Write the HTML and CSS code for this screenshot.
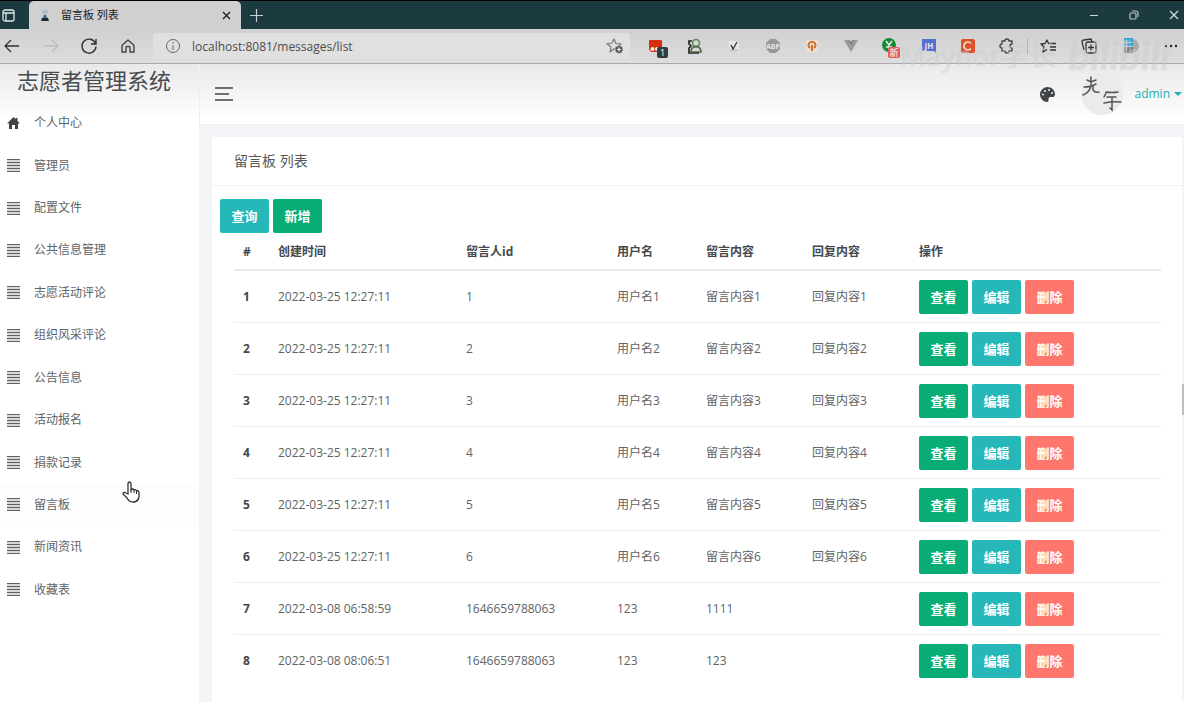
FILE: index.html
```html
<!DOCTYPE html>
<html lang="zh-CN">
<head>
<meta charset="utf-8">
<meta name="viewport" content="width=device-width, initial-scale=1">
<title>留言板 列表</title>
<link rel="stylesheet" href="styles.css">
</head>
<body>
<svg class="defs" aria-hidden="true">
  <symbol id="lines" viewBox="0 0 13 13"><path d="M0 .5h13M0 3.500h13M0 6.500h13M0 9.500h13M0 12.500h13" stroke="#606366" stroke-width="1.400"/></symbol>
</svg>

<header class="browser">
  <div class="titlebar">
    <button class="tab-menu" aria-label="标签页操作"><svg width="13" height="13" viewBox="0 0 13 13" fill="none" stroke="#dfe6e7" stroke-width="1.3"><rect x="1" y="1" width="11" height="11" rx="2"/><path d="M1 4h11M4 4v8"/></svg></button>
    <div class="tab">
      <svg width="10" height="14" viewBox="0 0 10 14"><path d="M2 2h6v2L6 7l3 6H1l3-6-2-3z" fill="#b4bec5"/><path d="M4 7h2l1 3H3z" fill="#45637b"/><path d="M2 10h6l1 3H1z" fill="#152c40"/></svg>
      <span class="tab-title">留言板 列表</span>
      <button aria-label="关闭标签页"><svg width="9" height="9" viewBox="0 0 9 9" stroke="#222" stroke-width="1.4"><path d="M1 1l7 7M8 1L1 8"/></svg></button>
    </div>
    <button class="new-tab" aria-label="新建标签页"><svg width="13" height="13" viewBox="0 0 13 13" stroke="#c5d0d2" stroke-width="1.2"><path d="M6.500 0v13M0 6.500h13"/></svg></button>
    <div class="window-buttons">
      <button aria-label="最小化"><svg width="10" height="10" viewBox="0 0 10 10" stroke="#d5dcdd"><path d="M1 5.500h8"/></svg></button>
      <button aria-label="还原"><svg width="10" height="10" viewBox="0 0 10 10" fill="none" stroke="#b9c4c6" stroke-width="1.2"><rect x="1" y="3" width="6" height="6" rx="1"/><path d="M3 1h4q2 0 2 2v4"/></svg></button>
      <button aria-label="关闭"><svg width="10" height="10" viewBox="0 0 10 10" stroke="#d5dcdd" stroke-width="1.2"><path d="M1 1l8 8M9 1L1 9"/></svg></button>
    </div>
  </div>
  <div class="toolbar">
    <div class="tools">
      <button aria-label="后退"><svg viewBox="0 0 20 20" fill="none" stroke="#333" stroke-width="1.3"><path d="M18 10H4M10 4l-6 6 6 6"/></svg></button>
      <button aria-label="前进"><svg viewBox="0 0 20 20" fill="none" stroke="#bdbdbd" stroke-width="1.3"><path d="M4 10h14M12 4l6 6-6 6"/></svg></button>
      <button aria-label="刷新"><svg viewBox="0 0 20 20" fill="none" stroke="#333" stroke-width="1.4"><path d="M16.500 7.500a7 7 0 1 0 .5 3M17 3v5h-5"/></svg></button>
      <button aria-label="主页"><svg viewBox="0 0 20 20" fill="none" stroke="#444" stroke-width="1.4" stroke-linejoin="round"><path d="M4 9.500L10 4l6 5.500V16h-4v-4.500q0-1-1-1H9q-1 0-1 1V16H4z"/></svg></button>
    </div>
    <div class="address">
      <svg width="16" height="16" viewBox="0 0 16 16" fill="none" stroke="#666"><circle cx="8" cy="8" r="6.500"/><path d="M8 7v5M8 4v1.500"/></svg>
      <input class="url" aria-label="地址" value="localhost:8081/messages/list">
      <button aria-label="收藏此页"><svg width="18" height="18" viewBox="0 0 18 18" fill="none" stroke="#777" stroke-width="1.200"><path d="M8 2l2 4.500 5 .5-3.500 3L8 12l-4 3 1-5-4-3.500 5-.5z" stroke-linejoin="round"/><circle cx="13" cy="12.500" r="4" fill="#555" stroke="#ddd" stroke-width=".6"/><path d="M13 10.500v4M11 12.500h4" stroke="#eee"/></svg></button>
    </div>
    <div class="tools extensions">
      <button aria-label="扩展 1" class="badged"><svg viewBox="0 0 20 20"><path d="M4 4h11q1 0 1 1v11H5l-2-3V5q0-1 1-1z" fill="#d62f0b"/><circle cx="6.500" cy="13" r="2" fill="#eee"/><circle cx="11" cy="13" r="2" fill="#eee"/></svg><span class="badge">1</span></button>
      <button aria-label="扩展 2"><svg viewBox="0 0 20 20" fill="none"><path d="M7 5H4v3l2 2-2 2v5h10" stroke="#222" stroke-width="1.700"/><circle cx="11" cy="7" r="3.500" stroke="#5a8450" stroke-width="1.500"/><path d="M6 16q0-5 5-5.500Q16 11 16 16z" stroke="#48643f" stroke-width="1.500"/></svg></button>
      <button aria-label="扩展 3"><svg viewBox="0 0 20 20" fill="none"><rect x="5" y="5" width="10" height="10" rx="1" fill="#e6e6e6"/><path d="M6 14h8" stroke="#aaa"/><path d="M7 9l2 4 4-7" stroke="#333" stroke-width="1.300"/></svg></button>
      <button aria-label="扩展 4"><svg viewBox="0 0 20 20"><path d="M7 3h6l4 4v6l-4 4H7l-4-4V7z" fill="#999"/><text x="10" y="12.500" class="abp">ABP</text></svg></button>
      <button aria-label="扩展 5"><svg viewBox="0 0 20 20" fill="none"><rect x="4" y="4" width="12" height="12" rx="2" fill="#e6dfda"/><path d="M8 12a3.500 3.500 0 1 1 4 0M10 9v6" stroke="#cf7028" stroke-width="2"/></svg></button>
      <button aria-label="扩展 6"><svg viewBox="0 0 20 20"><path d="M3 4h14l-7 12z" fill="#999"/><path d="M7 4h6l-3 5z" fill="#d6d6d6"/><path d="M7 4l3 5 3-5h-1.500L10 6 8.500 4z" fill="#777"/></svg></button>
      <button aria-label="扩展 7" class="badged"><svg viewBox="0 0 20 20" fill="none"><circle cx="9" cy="9" r="7" fill="#16893a"/><path d="M6 5l3 4 3-4M9 9v4M6 11h6" stroke="#e4f2e6" stroke-width="1.500"/></svg><span class="badge badge-new">新</span></button>
      <button aria-label="扩展 8"><svg viewBox="0 0 20 20"><path d="M3 3h14v14l-3-2H3z" fill="#536fd1"/><text x="10" y="12.500" class="glyph-jh">JH</text></svg></button>
      <button aria-label="扩展 9"><svg viewBox="0 0 20 20"><rect x="3" y="3" width="14" height="14" rx="2" fill="#e0512b"/><path d="M13 7.500a4 4 0 1 0 0 5" stroke="#f3dcd4" stroke-width="1.700" fill="none"/></svg></button>
      <button aria-label="扩展"><svg viewBox="0 0 20 20" fill="none" stroke="#444" stroke-width="1.400" stroke-linejoin="round"><path d="M5 5h3q0-2 2-2t2 2h3v3q-2 0-2 2t2 2v3h-3q0 2-2 2t-2-2H5v-3q-2 0-2-2t2-2z"/></svg></button>
    </div>
    <span class="divider"></span>
    <div class="tools">
      <button aria-label="收藏夹"><svg viewBox="0 0 20 20" fill="none" stroke="#333" stroke-width="1.300" stroke-linejoin="round"><path d="M12 7.500h-1.500L9 4 7 7.500l-4 .5 3 3-1 5 4-2.500M12 7.500h6M12 11h6M12 14h6"/></svg></button>
      <button aria-label="集锦"><svg viewBox="0 0 20 20" fill="none" stroke="#333" stroke-width="1.300"><path d="M5 14L3 6q0-2 2-2l7-1 1 3"/><rect x="7" y="6" width="10" height="11" rx="2"/><path d="M12 8.500v6M9 11.500h6"/></svg></button>
      <button aria-label="用户"><svg viewBox="0 0 20 20"><circle cx="12" cy="10" r="7" fill="#aaa"/><path d="M4 2h9v8H4z" fill="#2fa3d0"/><path d="M4 11h9v6H4z" fill="#777"/><path d="M6.500 3v13M10 3v13M4 6.500h9M4 10.500h9" stroke="#c7dde5" stroke-width=".7"/></svg></button>
      <button aria-label="更多"><svg viewBox="0 0 20 20" fill="#222"><circle cx="5" cy="10" r="1.200"/><circle cx="10" cy="10" r="1.200"/><circle cx="15" cy="10" r="1.200"/></svg></button>
    </div>
  </div>
  <div class="watermark"><span>Maynor学长</span><b>bilibili</b></div>
</header>

<div class="app">
  <aside class="sidebar">
    <h1>志愿者管理系统</h1>
    <nav class="menu">
      <a href="#"><svg width="13" height="12" viewBox="0 0 13 12" fill="#444"><path d="M6.500 0L8.500 2V1h2v3L13 6.500h-2V12H8V8H5v4H2V6.500H0z"/></svg>个人中心</a>
      <a href="#"><svg width="13" height="13"><use href="#lines"/></svg>管理员</a>
      <a href="#"><svg width="13" height="13"><use href="#lines"/></svg>配置文件</a>
      <a href="#"><svg width="13" height="13"><use href="#lines"/></svg>公共信息管理</a>
      <a href="#"><svg width="13" height="13"><use href="#lines"/></svg>志愿活动评论</a>
      <a href="#"><svg width="13" height="13"><use href="#lines"/></svg>组织风采评论</a>
      <a href="#"><svg width="13" height="13"><use href="#lines"/></svg>公告信息</a>
      <a href="#"><svg width="13" height="13"><use href="#lines"/></svg>活动报名</a>
      <a href="#"><svg width="13" height="13"><use href="#lines"/></svg>捐款记录</a>
      <a href="#" class="hovered"><svg width="13" height="13"><use href="#lines"/></svg>留言板</a>
      <a href="#"><svg width="13" height="13"><use href="#lines"/></svg>新闻资讯</a>
      <a href="#"><svg width="13" height="13"><use href="#lines"/></svg>收藏表</a>
    </nav>
  </aside>
  <main class="main">
    <div class="topbar">
      <button class="toggle" aria-label="折叠菜单"><svg width="18" height="14" viewBox="0 0 18 14" stroke="#444" stroke-width="1.500"><path d="M0 1h18M0 7h14M0 13h18"/></svg></button>
      <button aria-label="主题"><svg width="15" height="15" viewBox="0 0 15 15"><path d="M7.500 0A7.500 7.500 0 0 0 0 7.500C0 12 4 15 7 15c3 0 0-4 3-5h3c1 0 2-1 2-2.500C15 3 11.500 0 7.500 0z" fill="#424548"/><g fill="#eee"><circle cx="3" cy="7.500" r="1"/><circle cx="5" cy="4" r="1"/><circle cx="9" cy="3" r="1"/><circle cx="12" cy="6" r="1"/></g></svg></button>
      <svg class="avatar" width="44" height="44" viewBox="0 0 44 44" fill="none"><circle cx="23" cy="22" r="21" fill="#ebebec"/><g stroke="#555" stroke-width="1.500" stroke-linecap="round"><path d="M12 5v8M8 8l4 2 5-2M5 15q7 0 12-3M12 14q-2 7-8 9M14 14v4q2 3 6 2"/><path d="M27 20q6 1 12 0M27 21l-2 4M28 25h9M25 31q10-2 17-1M33 25v13l-2-2"/></g></svg>
      <button class="account">admin <svg width="8" height="5" viewBox="0 0 8 5"><path d="M0 0h8L4 4z" fill="#21aeb0"/></svg></button>
    </div>
    <section class="card">
      <h2>留言板 列表</h2>
      <div class="card-body">
        <div class="actions"><button class="btn teal">查询</button><button class="btn green">新增</button></div>
        <table>
          <colgroup><col class="c-no"><col class="c-time"><col class="c-id"><col class="c-user"><col class="c-msg"><col class="c-reply"><col></colgroup>
          <thead><tr><th>#</th><th>创建时间</th><th>留言人id</th><th>用户名</th><th>留言内容</th><th>回复内容</th><th>操作</th></tr></thead>
          <tbody>
            <tr><th>1</th><td>2022-03-25 12:27:11</td><td>1</td><td>用户名1</td><td>留言内容1</td><td>回复内容1</td><td><div class="ops"><button class="btn green">查看</button><button class="btn teal">编辑</button><button class="btn red">删除</button></div></td></tr>
            <tr><th>2</th><td>2022-03-25 12:27:11</td><td>2</td><td>用户名2</td><td>留言内容2</td><td>回复内容2</td><td><div class="ops"><button class="btn green">查看</button><button class="btn teal">编辑</button><button class="btn red">删除</button></div></td></tr>
            <tr><th>3</th><td>2022-03-25 12:27:11</td><td>3</td><td>用户名3</td><td>留言内容3</td><td>回复内容3</td><td><div class="ops"><button class="btn green">查看</button><button class="btn teal">编辑</button><button class="btn red">删除</button></div></td></tr>
            <tr><th>4</th><td>2022-03-25 12:27:11</td><td>4</td><td>用户名4</td><td>留言内容4</td><td>回复内容4</td><td><div class="ops"><button class="btn green">查看</button><button class="btn teal">编辑</button><button class="btn red">删除</button></div></td></tr>
            <tr><th>5</th><td>2022-03-25 12:27:11</td><td>5</td><td>用户名5</td><td>留言内容5</td><td>回复内容5</td><td><div class="ops"><button class="btn green">查看</button><button class="btn teal">编辑</button><button class="btn red">删除</button></div></td></tr>
            <tr><th>6</th><td>2022-03-25 12:27:11</td><td>6</td><td>用户名6</td><td>留言内容6</td><td>回复内容6</td><td><div class="ops"><button class="btn green">查看</button><button class="btn teal">编辑</button><button class="btn red">删除</button></div></td></tr>
            <tr><th>7</th><td>2022-03-08 06:58:59</td><td>1646659788063</td><td>123</td><td>1111</td><td></td><td><div class="ops"><button class="btn green">查看</button><button class="btn teal">编辑</button><button class="btn red">删除</button></div></td></tr>
            <tr><th>8</th><td>2022-03-08 08:06:51</td><td>1646659788063</td><td>123</td><td>123</td><td></td><td><div class="ops"><button class="btn green">查看</button><button class="btn teal">编辑</button><button class="btn red">删除</button></div></td></tr>
          </tbody>
        </table>
      </div>
    </section>
  </main>
</div>
<span class="scroll-thumb"></span>
<svg class="pointer" width="18" height="23" viewBox="0 0 18 23"><path d="M6 13V3q0-2 1.500-2T9 3v6q2-2 3 0 2-1 2.500 1Q17 9 17 12v4q-1 5-6 5-4 0-6-4l-4-4q0-2 2-1.500z" fill="#fff" stroke="#333" stroke-width="1.300"/><path d="M9 9v3M12 9v3M14.500 10v3" stroke="#333"/></svg>
</body>
</html>
```
FILE: styles.css
```css
* { box-sizing: border-box; }
body {
  margin: 0;
  min-height: 100vh;
  display: flex;
  flex-direction: column;
  overflow: hidden;
  font: 12px/18px "Open Sans", "Noto Sans CJK SC", sans-serif;
  color: #606366;
  background: #f3f4f8;
}
button { margin: 0; padding: 0; border: 0; background: none; font: inherit; color: inherit; }
svg { display: block; flex: none; }
h1, h2 { margin: 0; font-weight: 400; }
a { color: inherit; text-decoration: none; }
.defs { position: absolute; width: 0; height: 0; }

/* Browser frame */
.browser { position: relative; border-top: 1px solid #000; border-bottom: 1px solid #aaa; }
.titlebar { display: flex; align-items: center; height: 28px; background: #1c3b41; }
.tab-menu { width: 29px; padding-left: 2px; }
.tab {
  display: flex;
  align-items: center;
  gap: 11px;
  width: 212px;
  height: 28px;
  padding: 0 10px 0 11px;
  border-radius: 5px 5px 0 0;
  background: #d0d0d0;
}
.tab-title { flex: 1; font-size: 11px; color: #222; }
.new-tab { margin-left: 9px; }
.window-buttons { display: flex; gap: 30px; margin-left: auto; padding-right: 5px; }
.toolbar {
  display: flex;
  align-items: center;
  height: 34px;
  padding: 0 3px 0 1px;
  background: linear-gradient(#d0d0d0, #dddddd);
}
.tools { display: flex; gap: 21px; }
.tools:first-child, .extensions { gap: 19px; }
.tools button { width: 20px; height: 20px; }
.address {
  display: flex;
  align-items: center;
  flex: 1;
  gap: 11px;
  height: 26px;
  margin: 0 16px 0 15px;
  padding: 0 6px 0 12px;
  border-radius: 4px;
  background: #e0e0e0;
}
.url { flex: 1; min-width: 0; padding: 1px 0 0; border: 0; outline: 0; background: none; font: inherit; color: #4c4c4c; }
.divider { width: 1px; height: 16px; margin: 0 10px; background: #b5b5b5; }
.badged { position: relative; }
.badge {
  position: absolute;
  left: 11px;
  top: 11px;
  width: 11px;
  height: 11px;
  border-radius: 2px;
  background: #333c3d;
  color: #fff;
  font-size: 9px;
  line-height: 11px;
  text-align: center;
}
.badge-new { left: 8px; width: 12px; background: #dd5f55; }
.abp, .glyph-jh { font-size: 7px; font-weight: 700; text-anchor: middle; fill: #e5e5e5; }
.glyph-jh { font-size: 8px; }
.watermark {
  position: absolute;
  right: 14px;
  top: 28px;
  z-index: 2;
  display: flex;
  align-items: center;
  gap: 12px;
  font-size: 28px;
  line-height: 52px;
  color: rgba(255, 255, 255, .28);
  text-shadow: 0 0 1px rgba(140, 140, 140, .3);
  pointer-events: none;
}
.watermark b { font: italic 700 40px/40px Lato, sans-serif; }

/* Application */
.app { display: flex; flex: 1; }
.sidebar {
  display: flex;
  flex-direction: column;
  flex: none;
  width: 199px;
  background: linear-gradient(#e9e9e9, #fff 56px);
}
.sidebar h1 { padding: 0 17px 6px; font-size: 22px; line-height: 32px; color: #484b4e; }
.menu { display: grid; grid-auto-rows: 1fr; flex: 1; margin-bottom: 91px; }
.menu a { display: flex; align-items: center; gap: 14px; min-height: 42px; padding-left: 7px; }
.hovered { background: #fdfdfd; }
.main { flex: 1; min-width: 0; display: flex; flex-direction: column; }
.topbar {
  display: flex;
  align-items: center;
  height: 61px;
  padding: 0 2px 0 15px;
  border-left: 1px solid #efeff1;
  border-bottom: 1px solid #f0f0f2;
  background: linear-gradient(#e9e9e9, #fff 56px);
}
.toggle { margin-right: auto; }
.avatar { margin: 0 11px 0 24px; }
.account { display: flex; align-items: center; gap: 4px; color: #21aeb0; }
.card { flex: 1; margin: 12px 2px 0 13px; border-radius: 2px 2px 0 0; background: #fff; }
.card h2 { padding: 14px 22px; border-bottom: 1px solid #f0f1f3; font-size: 14px; line-height: 20px; color: #55585b; }
.card-body { padding: 13px 21px 0 22px; }
.actions, .ops { display: flex; gap: 4px; }
.actions { margin-left: -14px; }
.btn {
  width: 49px;
  height: 34px;
  border-radius: 2px;
  color: #fff;
  font-size: 13px;
  font-weight: 700;
}
.teal { background: #26b8b8; }
.green { background: #08ad76; }
.red { background: #ff766d; }
table { width: 100%; border-collapse: separate; border-spacing: 0; table-layout: fixed; }
th, td { padding: 9px 9px 8px; text-align: left; font-weight: 400; border-bottom: 1px solid #ededee; }
th { font-weight: 700; color: #45484b; }
thead th { padding: 10px 9px 8px; border-bottom: 2px solid #ebebed; }
tbody tr:last-child > * { border-bottom: 0; }
.c-no { width: 35px; }
.c-time { width: 188px; }
.c-id { width: 151px; }
.c-user { width: 89px; }
.c-msg { width: 106px; }
.c-reply { width: 107px; }
.scroll-thumb { position: absolute; right: 0; top: 384px; width: 2px; height: 31px; background: #bebebe; }
.pointer { position: absolute; left: 122px; top: 481px; }
```
